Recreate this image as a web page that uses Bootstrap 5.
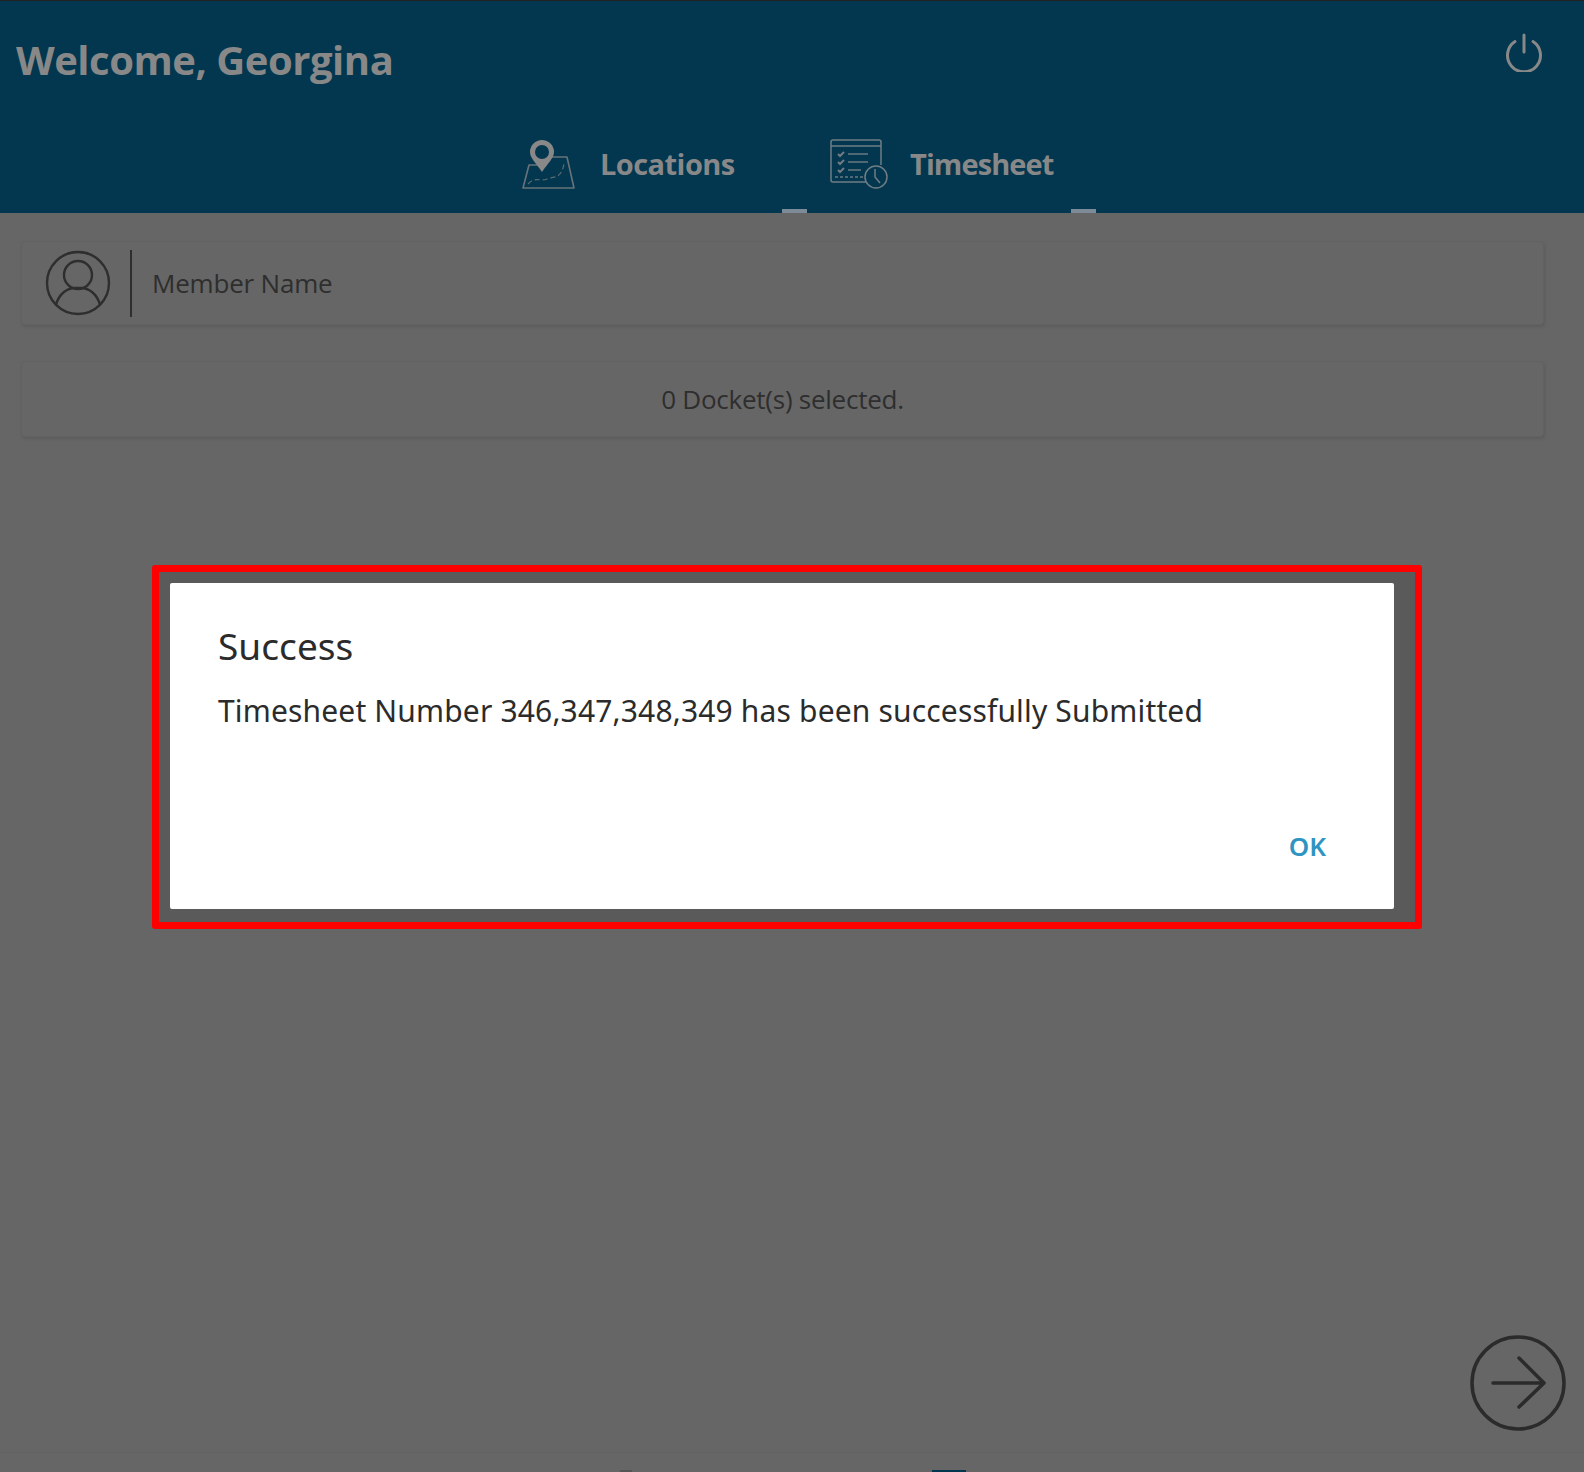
<!DOCTYPE html>
<html lang="en">

<head>
    <meta charset="UTF-8">
    <meta name="viewport" content="width=device-width, initial-scale=1.0">
    <title>Timesheet</title>
    <link href="https://cdn.jsdelivr.net/npm/bootstrap@5.3.0/dist/css/bootstrap.min.css" rel="stylesheet">
    <style>
        body {
            background: #666666;
            font-family: "Open Sans", "Noto Sans", sans-serif;
            height: 1472px;
            overflow: hidden;
        }

        .app-page {
            height: 1472px;
        }

        .top-head {
            background: #03374f;
            border-top: 1px solid #222;
            height: 213px;
            padding: 0 16px;
        }

        .head-row {
            height: 119px;
        }

        .welcome-text {
            color: #888888;
            font-size: 40px;
            font-weight: 700;
            letter-spacing: -0.47px;
            margin: 0 0 1px;
        }

        .power-icon {
            margin: -18px 24px 0 0;
        }

        .tab-strip {
            height: 93px;
            margin-left: 490px;
        }

        .tab-item {
            color: #888888;
            font-size: 29px;
            font-weight: 700;
            letter-spacing: -0.9px;
            height: 93px;
            padding-bottom: 6px;
        }

        .tab-locations {
            width: 276px;
            padding-left: 15px;
            letter-spacing: -0.55px;
        }

        .tab-times {
            width: 314px;
            padding-left: 48px;
            position: relative;
        }

        .tab-gap {
            margin-left: 22px;
        }

        .tab-locations .tab-gap {
            margin-left: 25px;
        }

        .tab-times::before,
        .tab-times::after {
            content: "";
            position: absolute;
            bottom: 0;
            width: 25px;
            height: 4px;
            background: #7c8b97;
        }

        .tab-times::before {
            left: 0;
        }

        .tab-times::after {
            right: 0;
        }

        .page-body {
            padding: 28px 40px 0 21px;
        }

        .dim-card {
            background: #666666;
            border: 1px solid #626262;
            border-radius: 4px;
            box-shadow: 1px 2px 3px #5c5c5c;
        }

        .member-card {
            height: 84px;
            padding-left: 23px;
            margin-bottom: 36px;
            color: #2e2e2e;
            font-size: 26px;
            letter-spacing: -0.2px;
        }

        .member-split {
            width: 2px;
            height: 67px;
            background: #2e2e2e;
            margin: 0 20px 0 19px;
        }

        .docket-card {
            height: 76px;
            color: #2e2e2e;
            font-size: 26px;
            letter-spacing: -0.25px;
        }

        .success-frame {
            position: absolute;
            left: 152px;
            top: 565px;
            width: 1270px;
            height: 364px;
            border: 7px solid #ff0000;
            border-radius: 3px;
            background: #5b5a5b;
            padding: 11px 21px 13px 11px;
        }

        .success-box {
            background: #fff;
            height: 100%;
            border-radius: 2px;
            padding: 40px 68px 0 48px;
            color: #2b2b2b;
            font-family: "Noto Sans", "Open Sans", sans-serif;
        }

        .success-title {
            font-size: 37px;
            line-height: 48px;
            margin: -1px 0 17px;
            font-weight: 400;
            letter-spacing: 0.05px;
        }

        .success-msg {
            font-size: 30px;
            line-height: 48px;
            margin: 0;
            letter-spacing: 0.16px;
            white-space: nowrap;
        }

        .ok-btn {
            color: #2e95c3;
            font-size: 26px;
            font-weight: 600;
            padding: 0;
            border: 0;
            line-height: 38px;
            margin-top: 92px;
        }

        .next-btn {
            position: absolute;
            left: 1470px;
            top: 1335px;
        }

        .foot-line {
            position: absolute;
            left: 0;
            right: 0;
            top: 1452px;
            border-top: 1px solid #626062;
        }

        .foot-tab {
            position: absolute;
            top: 1470px;
            height: 2px;
        }
    </style>
</head>

<body>
    <div class="app-page position-relative">
        <!-- Header -->
        <header class="top-head">
            <div class="head-row d-flex justify-content-between align-items-center">
                <h1 class="welcome-text">Welcome, Georgina</h1>
                <svg class="power-icon" width="40" height="40" viewBox="0 0 40 40" fill="none" stroke="#888888" stroke-width="3" stroke-linecap="round">
                    <path d="M11 9.5 A 16.5 16.5 0 1 0 29 9.5" />
                    <path d="M20 3 V20" />
                </svg>
            </div>
            <div class="tab-strip d-flex">
                <div class="tab-item tab-locations d-flex align-items-center">
                    <svg width="54" height="52" viewBox="0 0 54 52" fill="none" stroke="#888888" stroke-linejoin="round">
                        <path d="M17 27 H8 L2 50 H53 L46 19 H31" stroke-width="1.6" opacity=".75" />
                        <path d="M7 46 C14 38 20 44 26 41 S40 42 43 26" stroke-width="1.2" stroke-dasharray="5 3" opacity=".65" />
                        <path d="M21 34 C15 25 9 20 9 14 A12 12 0 0 1 33 14 C33 20 27 25 21 34 Z" fill="#888888" stroke="none" />
                        <circle cx="21" cy="14" r="7" fill="#03374f" stroke="none" />
                    </svg>
                    <span class="tab-gap">Locations</span>
                </div>
                <div class="tab-item tab-times d-flex align-items-center">
                    <svg width="58" height="50" viewBox="0 0 58 50" fill="none" stroke="#6f7d84" stroke-width="1.5">
                        <path d="M40 43 H3 Q1 43 1 41 V3 Q1 1 3 1 H49 Q51 1 51 3 V26" />
                        <path d="M1 7 H51" />
                        <path d="M8 15 l2 2 l4 -4 M8 23 l2 2 l4 -4 M8 31 l2 2 l4 -4" stroke-width="2" />
                        <path d="M18 15 H38 M18 23 H38 M18 31 H31" stroke-width="2" opacity=".7" />
                        <path d="M5 38 H38" stroke-width="2" stroke-dasharray="3 2" opacity=".7" />
                        <circle cx="46" cy="38" r="11" fill="#03374f" />
                        <path d="M45 30 V38 L50 44" />
                    </svg>
                    <span class="tab-gap">Timesheet</span>
                </div>
            </div>
        </header>

        <!-- Page content -->
        <main class="page-body">
            <div class="dim-card member-card d-flex align-items-center">
                <svg width="66" height="66" viewBox="0 0 66 66" fill="none" stroke="#2e2e2e" stroke-width="2.4">
                    <circle cx="33" cy="33" r="31" />
                    <circle cx="33" cy="25" r="14" />
                    <path d="M11 55 C14 43 23 38 30 38 H36 C43 38 52 43 55 55" />
                </svg>
                <div class="member-split"></div>
                <span>Member Name</span>
            </div>
            <div class="dim-card docket-card d-flex align-items-center justify-content-center">
                0 Docket(s) selected.
            </div>
        </main>

        <!-- Success dialog -->
        <div class="success-frame">
            <div class="success-box d-flex flex-column">
                <h5 class="success-title">Success</h5>
                <p class="success-msg">Timesheet Number 346,347,348,349 has been successfully Submitted</p>
                <div class="d-flex justify-content-end">
                    <button type="button" class="btn ok-btn">OK</button>
                </div>
            </div>
        </div>

        <svg class="next-btn" width="96" height="96" viewBox="0 0 96 96" fill="none" stroke="#2b2b2b" stroke-width="3.5" stroke-linecap="round" stroke-linejoin="round">
            <circle cx="48" cy="48" r="46" />
            <path d="M23 48 H73 M49 23 L74 48 L49 72" />
        </svg>

        <div class="foot-line"></div>
        <div class="foot-tab" style="left:620px;width:12px;background:#555"></div>
        <div class="foot-tab" style="left:932px;width:34px;background:#03374f"></div>
    </div>

    <script src="https://cdn.jsdelivr.net/npm/bootstrap@5.3.0/dist/js/bootstrap.bundle.min.js"></script>
</body>

</html>
